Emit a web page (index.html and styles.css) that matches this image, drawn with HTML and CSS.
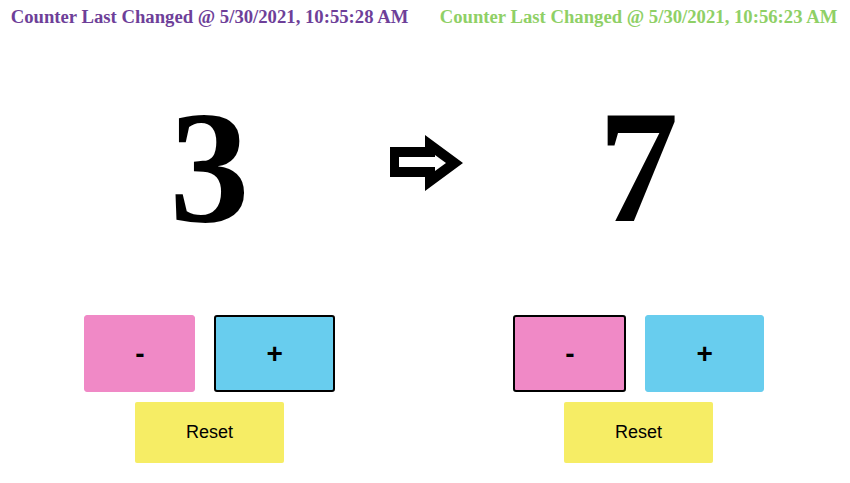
FILE: index.html
```html
<!DOCTYPE html>
<html>
<head>
<meta charset="utf-8">
<link rel="stylesheet" href="styles.css">
</head>
<body>
<div class="board">
  <div class="stamp stamp-left">Counter Last Changed @ 5/30/2021, 10:55:28 AM</div>
  <div class="gapcell"></div>
  <div class="stamp stamp-right">Counter Last Changed @ 5/30/2021, 10:56:23 AM</div>

  <div class="digit">3</div>
  <div class="arrow">
    <svg width="75" height="58" viewBox="0 0 75 58">
      <polygon points="1,13 36,13 36,1 74,29 36,57 36,43 1,43" fill="#000"/>
      <polygon points="10,23 46,23 46,21 57,29 46,37 46,33 10,33" fill="#fff"/>
    </svg>
  </div>
  <div class="digit">7</div>

  <div class="controls">
    <div class="pair">
      <button class="btn btn-minus">-</button>
      <button class="btn btn-plus selected">+</button>
    </div>
    <button class="reset">Reset</button>
  </div>
  <div class="gapcell"></div>
  <div class="controls">
    <div class="pair">
      <button class="btn btn-minus selected">-</button>
      <button class="btn btn-plus">+</button>
    </div>
    <button class="reset">Reset</button>
  </div>
</div>
</body>
</html>
```

FILE: styles.css
```css
html, body {
  background: #ffffff;
}
body {
  margin: 8px;
  font-family: "Liberation Serif", "Times New Roman", serif;
}
.board {
  display: grid;
  grid-template-columns: 403px 25px 405px;
}
.stamp {
  font-weight: bold;
  font-size: 18.7px;
  line-height: 20px;
  text-align: center;
  white-space: nowrap;
  margin-top: -1px;
}
.stamp-left { color: #6e3f99; }
.stamp-right { color: #8fd066; }
.digit {
  font-family: "Liberation Serif", "Times New Roman", serif;
  font-weight: bold;
  font-size: 160px;
  line-height: 160px;
  text-align: center;
  margin-top: 60px;
}
.arrow {
  display: flex;
  justify-content: center;
  align-items: flex-start;
  margin-top: 107px;
}
.arrow svg {
  flex: none;
  display: block;
  margin-left: 6px;
}
.controls {
  display: flex;
  flex-direction: column;
  align-items: center;
  gap: 10px;
  margin-top: 68px;
}
.pair {
  display: flex;
  gap: 19px;
}
.btn {
  font-family: "Liberation Sans", Arial, sans-serif;
  font-weight: bold;
  font-size: 28px;
  height: 77px;
  box-sizing: border-box;
  padding: 0 50px;
  border-radius: 3px;
  color: #000;
  border: 1px solid transparent;
  cursor: pointer;
}
.btn-minus {
  background: #f089c6;
  border-color: #f089c6;
}
.btn-plus {
  background: #68cdee;
  border-color: #68cdee;
}
.btn.selected {
  border: 2px solid #000;
}
.reset {
  font-family: "Liberation Sans", Arial, sans-serif;
  font-size: 18px;
  width: 149px;
  height: 61px;
  background: #f6ed65;
  border: none;
  border-radius: 2px;
  color: #000;
}
```
